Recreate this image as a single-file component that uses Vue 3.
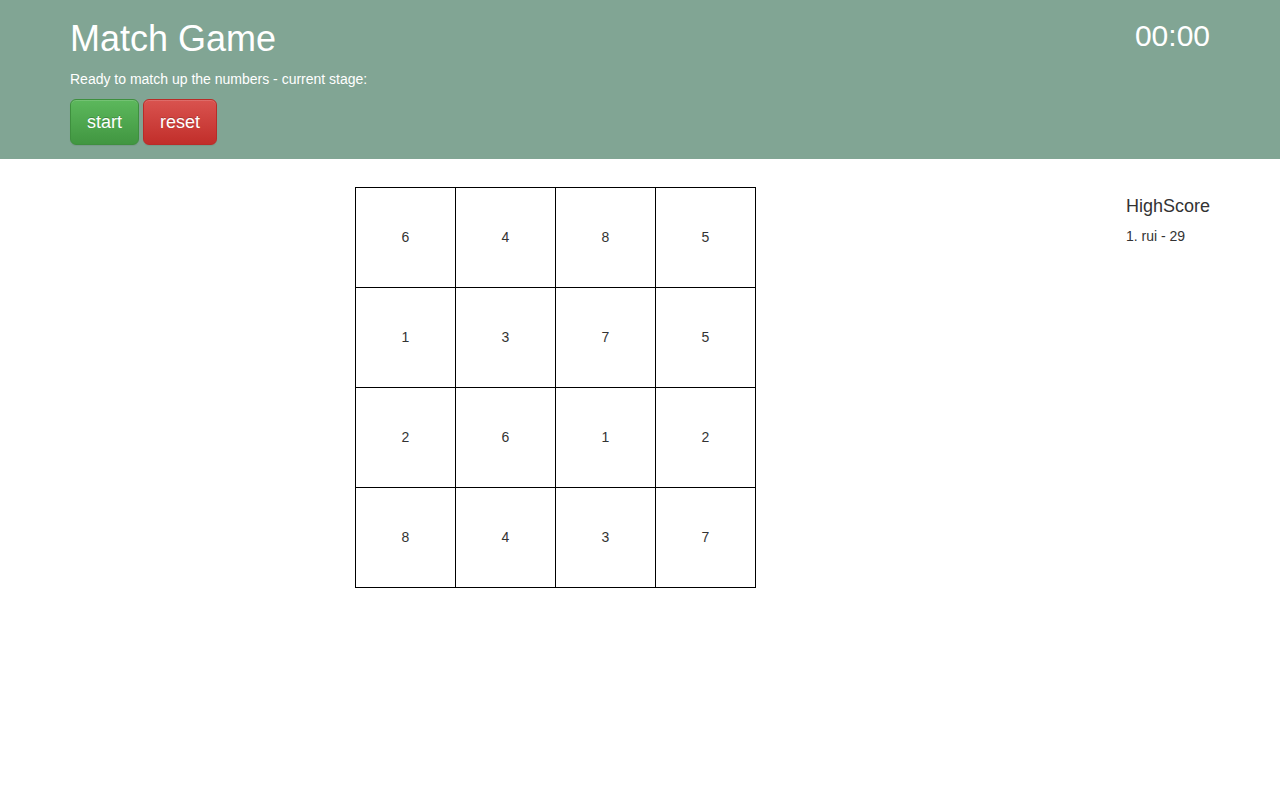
<script setup>
import { ref } from 'vue'

const rows = ref([
  [6, 4, 8, 5],
  [1, 3, 7, 5],
  [2, 6, 1, 2],
  [8, 4, 3, 7],
])
const scores = ref([{ name: 'rui', time: 29 }])
</script>

<template>
  <header class="banner">
    <div class="container banner-row">
      <div>
        <h1>Match Game</h1>
        <p class="status">Ready to match up the numbers - current stage:</p>
        <div class="actions">
          <button type="button" class="btn start">start</button>
          <button type="button" class="btn reset">reset</button>
        </div>
      </div>
      <div class="timer">00:00</div>
    </div>
  </header>
  <main class="container game">
    <div class="board-area">
      <table class="board">
        <tbody>
          <tr v-for="(row, r) in rows" :key="r">
            <td v-for="(n, c) in row" :key="c">{{ n }}</td>
          </tr>
        </tbody>
      </table>
    </div>
    <aside class="scores">
      <h2>HighScore</h2>
      <div v-for="(s, i) in scores" :key="i">{{ i + 1 }}. {{ s.name }} - {{ s.time }}</div>
    </aside>
  </main>
</template>

<style>
body {
  margin: 0;
  background: #fff;
  color: #333;
  font: 14px/20px Helvetica, "Liberation Sans", Arial, sans-serif;
}
</style>

<style scoped>
* {
  box-sizing: border-box;
}
.container {
  max-width: 1170px;
  margin: 0 auto;
  padding: 0 15px;
}
.banner {
  background: #81a594;
  color: #fff;
  padding: 19px 0 14px;
}
.banner-row {
  display: flex;
  justify-content: space-between;
}
h1 {
  margin: 0 0 10px;
  font-size: 36px;
  line-height: 40px;
  font-weight: 500;
}
.status {
  margin: 0 0 10px;
}
.actions {
  display: flex;
  gap: 4px;
}
.btn {
  height: 46px;
  padding: 0 16px;
  border: 1px solid;
  border-radius: 6px;
  font-family: inherit;
  font-size: 18px;
  line-height: 24px;
  color: #fff;
  text-shadow: 0 -1px 0 rgba(0, 0, 0, 0.2);
  box-shadow: inset 0 1px 0 rgba(255, 255, 255, 0.15), 0 1px 1px rgba(0, 0, 0, 0.075);
  cursor: pointer;
}
.start {
  background: linear-gradient(#5cb85c, #419641);
  border-color: #3e8f3e;
}
.reset {
  background: linear-gradient(#d9534f, #c12e2a);
  border-color: #b92c28;
}
.timer {
  font-size: 30px;
  line-height: 33px;
}
.game {
  display: flex;
  padding-top: 28px;
}
.board-area {
  flex: 1;
  margin-left: 25%;
}
.board {
  border-collapse: collapse;
}
.board td {
  width: 100px;
  height: 100px;
  padding: 0 0 2px;
  border: 1px solid #000;
  text-align: center;
}
.scores {
  padding-top: 9px;
}
h2 {
  margin: 0 0 10px;
  font-size: 18px;
  line-height: 20px;
  font-weight: 500;
}
</style>
